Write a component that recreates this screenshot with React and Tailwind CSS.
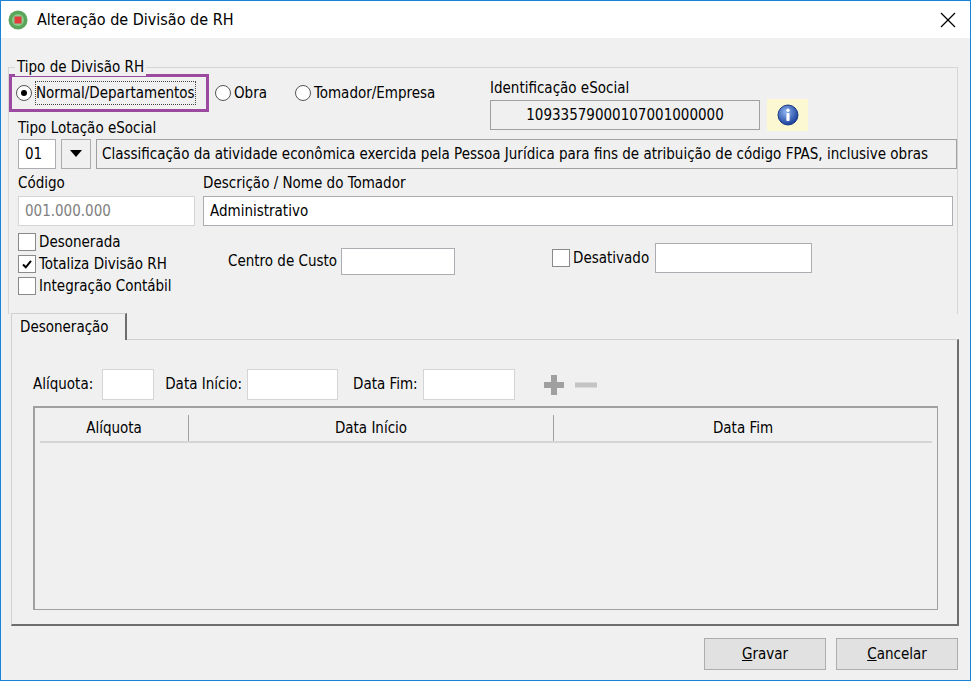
import React from "react";

const field = "bg-white border border-[#abadb3] h-[30px] flex items-center px-1.5";

function Check({ checked, label }) {
	return (
		<div className="flex items-center gap-[3px] h-[22px]">
			<span className="w-[18px] h-[18px] border border-[#8a8a8a] bg-white flex items-center justify-center">
				{checked && (
					<svg width="12" height="12" viewBox="0 0 12 12">
						<path d="M2 6.5 L4.8 9.3 L10 2.8" stroke="#000" strokeWidth="2" fill="none" />
					</svg>
				)}
			</span>
			<span>{label}</span>
		</div>
	);
}

function Radio({ checked, label }) {
	return (
		<div className="flex items-center gap-[3px]">
			<span className="w-[16px] h-[16px] rounded-full border border-[#555] bg-white flex items-center justify-center">
				{checked && <span className="w-[6px] h-[6px] rounded-full bg-black" />}
			</span>
			<span>{label}</span>
		</div>
	);
}

export default function App() {
	return (
		<div
			className="w-[971px] h-[681px] bg-[#f0f0f0] border border-[#1883d7] text-[15px] text-black flex flex-col overflow-hidden"
			style={{ fontFamily: "'DejaVu Sans Condensed', 'Liberation Sans', sans-serif" }}
		>
			{/* title bar */}
			<div className="h-[37px] bg-white flex items-center pl-[7px] pr-[14px] shrink-0">
				<svg width="20" height="20" viewBox="0 0 20 20">
					<circle cx="10" cy="10" r="9.5" fill="#5aa55a" />
					<circle cx="10" cy="10" r="6" fill="#8cc98c" />
					<rect x="6.5" y="6.5" width="7" height="7" fill="#e23b3b" />
				</svg>
				<span className="ml-[9px] text-[16px]">Alteração de Divisão de RH</span>
				<svg className="ml-auto" width="16" height="16" viewBox="0 0 16 16">
					<path d="M1 1 L15 15 M15 1 L1 15" stroke="#000" strokeWidth="1.3" />
				</svg>
			</div>

			<div className="relative flex-1 px-[7px] pt-[29px]">
				{/* group box */}
				<div className="relative border-l border-t border-r border-[#d5d5d5] h-[247px] mr-[5px]">
					<span className="absolute -top-[10px] left-[6px] bg-[#f0f0f0] px-[2px] leading-[18px]">
						Tipo de Divisão RH
					</span>
					<div className="flex">
						<div className="w-[481px]">
							<div className="flex items-center h-[38px] mt-[6px]">
								<div className="border-[3px] border-[#9b4aa0] h-[38px] w-[200px] flex items-center pl-[4px]">
									<div className="flex items-center gap-[3px]">
										<span className="w-[16px] h-[16px] rounded-full border border-[#555] bg-white flex items-center justify-center">
											<span className="w-[6px] h-[6px] rounded-full bg-black" />
										</span>
										<span className="border border-dotted border-[#444] whitespace-nowrap">Normal/Departamentos</span>
									</div>
								</div>
								<div className="ml-[6px]">
									<Radio label="Obra" />
								</div>
								<div className="ml-[28px]">
									<Radio label="Tomador/Empresa" />
								</div>
							</div>
							<div className="pl-[9px] mt-[8px] leading-[16px]">Tipo Lotação eSocial</div>
						</div>
						<div className="mt-[12px]">
							<div className="leading-[16px]">Identificação eSocial</div>
							<div className="flex items-center mt-[3px]">
								<div className="w-[270px] h-[30px] border border-[#a0a0a0] flex items-center justify-center bg-[#f0f0f0]">
									10933579000107001000000
								</div>
								<div className="ml-[7px] w-[41px] h-[32px] bg-[#fbf8d2] flex items-center justify-center">
									<svg width="22" height="22" viewBox="0 0 22 22">
										<defs>
											<radialGradient id="g" cx="40%" cy="35%" r="65%">
												<stop offset="0" stopColor="#8fb6f0" />
												<stop offset="1" stopColor="#1a3f9c" />
											</radialGradient>
										</defs>
										<circle cx="11" cy="11" r="10" fill="url(#g)" stroke="#1b3a80" />
										<circle cx="11" cy="6.3" r="1.7" fill="#fff" />
										<rect x="9.4" y="9" width="3.2" height="8" rx="1" fill="#fff" />
									</svg>
								</div>
							</div>
						</div>
					</div>

					<div className="flex items-center pl-[9px] mt-[3px] gap-[5px]">
						<div className={field + " w-[38px]"}>01</div>
						<div className="w-[30px] h-[30px] border border-[#adadad] bg-[#f0f0f0] flex items-center justify-center">
							<svg width="12" height="8" viewBox="0 0 12 8"><path d="M0 0 H12 L6 7 Z" fill="#000" /></svg>
						</div>
						<div className="flex-1 h-[30px] border border-[#a0a0a0] flex items-center px-[5px] whitespace-nowrap overflow-hidden">
							Classificação da atividade econômica exercida pela Pessoa Jurídica para fins de atribuição de código FPAS, inclusive obras
						</div>
					</div>

					<div className="flex pl-[9px] mt-[6px] gap-[8px] pr-[4px]">
						<div className="w-[177px]">
							<div className="leading-[16px]">Código</div>
							<div className={field + " mt-[5px] text-[#808080] border-[#d5d5d5]"}>001.000.000</div>
						</div>
						<div className="flex-1">
							<div className="leading-[16px]">Descrição / Nome do Tomador</div>
							<div className={field + " mt-[5px]"}>Administrativo</div>
						</div>
					</div>

					<div className="flex pl-[9px] mt-[5px]">
						<div className="w-[210px]">
							<Check label="Desonerada" />
							<Check checked label="Totaliza Divisão RH" />
							<Check label="Integração Contábil" />
						</div>
						<div className="flex items-center gap-[4px] h-[28px] mt-[16px]">
							<span>Centro de Custo</span>
							<div className="w-[114px] h-[27px] bg-white border border-[#abadb3]" />
						</div>
						<div className="flex items-center h-[30px] mt-[12px] ml-[97px] gap-[6px]">
							<Check label="Desativado" />
							<div className="w-[157px] h-[30px] bg-white border border-[#abadb3]" />
						</div>
					</div>
				</div>

				{/* tab */}
				<div className="relative -mt-[1px] ml-[3px]">
					<div className="w-[116px] h-[27px] border-t border-l border-[#d0d0d0] border-r-2 border-r-[#6d6d6d] flex items-center pl-[8px] relative z-10 bg-[#f0f0f0]">
						Desoneração
					</div>
					<div className="h-[287px] -mt-[1px] w-[948px] border border-[#d0d0d0] border-r-[#6d6d6d] border-b-[#6d6d6d] border-r-2 border-b-2 pl-[21px] pr-[19px] pt-[29px]">
						<div className="flex items-center h-[31px]">
							<span>Alíquota:</span>
							<div className="ml-[9px] w-[52px] h-[31px] bg-white border border-[#d5d5d5]" />
							<span className="ml-[11px]">Data Início:</span>
							<div className="ml-[5px] w-[91px] h-[31px] bg-white border border-[#d5d5d5]" />
							<span className="ml-[15px]">Data Fim:</span>
							<div className="ml-[5px] w-[92px] h-[31px] bg-white border border-[#d5d5d5]" />
							<svg className="ml-[28px]" width="22" height="22" viewBox="0 0 22 22">
								<path d="M8 1 H14 V8 H21 V14 H14 V21 H8 V14 H1 V8 H8 Z" fill="#a0a0a0" />
							</svg>
							<svg className="ml-[10px]" width="22" height="22" viewBox="0 0 22 22">
								<rect x="0" y="8.5" width="22" height="5" fill="#c4c4c4" />
							</svg>
						</div>
						<div className="mt-[6px] h-[204px] border border-[#a0a0a0] border-t-2 border-l-2 px-[5px] pt-[7px]">
							<div className="flex h-[28px] border-b-2 border-[#d5d5d5]">
								<div className="w-[149px] border-r border-[#a0a0a0] flex items-center justify-center">Alíquota</div>
								<div className="w-[365px] border-r border-[#a0a0a0] flex items-center justify-center">Data Início</div>
								<div className="flex-1 flex items-center justify-center">Data Fim</div>
							</div>
						</div>
					</div>
				</div>

				<div className="flex justify-end gap-[10px] mt-[12px] pr-[5px]">
					<button className="w-[122px] h-[32px] border border-[#adadad] bg-[#e1e1e1]"><u>G</u>ravar</button>
					<button className="w-[122px] h-[32px] border border-[#adadad] bg-[#e1e1e1]"><u>C</u>ancelar</button>
				</div>
			</div>
		</div>
	);
}
